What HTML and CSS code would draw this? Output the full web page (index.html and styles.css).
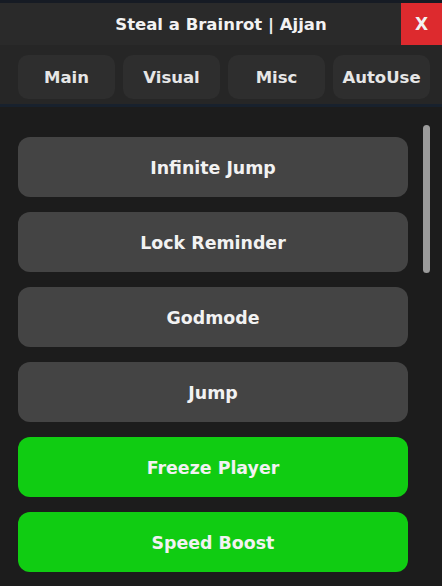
FILE: index.html
```html
<!DOCTYPE html>
<html>
<head>
<meta charset="utf-8">
<link rel="stylesheet" href="styles.css">
</head>
<body>
<div class="window">
  <div class="topstrip"></div>
  <div class="titlebar">
    <div class="title">Steal a Brainrot | Ajjan</div>
    <div class="close">X</div>
  </div>
  <div class="tabs">
    <div class="tab">Main</div>
    <div class="tab">Visual</div>
    <div class="tab">Misc</div>
    <div class="tab">AutoUse</div>
  </div>
  <div class="content">
    <div class="list">
      <div class="btn">Infinite Jump</div>
      <div class="btn">Lock Reminder</div>
      <div class="btn">Godmode</div>
      <div class="btn">Jump</div>
      <div class="btn on">Freeze Player</div>
      <div class="btn on">Speed Boost</div>
    </div>
    <div class="scrollbar"></div>
  </div>
</div>
</body>
</html>
```
FILE: styles.css
```css
html, body {
  margin: 0;
  padding: 0;
  background: #1c1c1c;
}
.window {
  width: 442px;
  height: 586px;
  overflow: hidden;
  font-family: "DejaVu Sans", "Open Sans", sans-serif;
  font-weight: 700;
  color: #f2f2f2;
}
.topstrip {
  height: 3px;
  background: #161b24;
}
.titlebar {
  height: 42px;
  background: #2a2a2a;
  display: flex;
  align-items: center;
}
.title {
  flex: 1;
  text-align: center;
  font-size: 16.5px;
  padding-left: 41px;
}
.close {
  width: 41px;
  height: 42px;
  background: #dd2a2e;
  display: flex;
  align-items: center;
  justify-content: center;
  font-size: 17px;
}
.tabs {
  height: 62px;
  background: #262626;
  display: flex;
  gap: 8px;
  padding: 10px 12px 0 18px;
  box-sizing: border-box;
  border-bottom: 3px solid #18212d;
}
.tab {
  width: 97px;
  height: 44px;
  border-radius: 10px;
  background: #2e2e2e;
  display: flex;
  align-items: center;
  justify-content: center;
  font-size: 16.5px;
  color: #e6e6e6;
}
.content {
  position: relative;
  height: 479px;
  background: #1c1c1c;
}
.list {
  display: flex;
  flex-direction: column;
  gap: 15px;
  padding: 30px 0 0 18px;
}
.btn {
  width: 390px;
  height: 60px;
  border-radius: 12px;
  background: #444444;
  display: flex;
  align-items: center;
  justify-content: center;
  font-size: 17.4px;
  padding-top: 2px;
  box-sizing: border-box;
}
.btn.on {
  background: #10cc12;
}
.scrollbar {
  position: absolute;
  left: 423px;
  top: 18px;
  width: 7px;
  height: 148px;
  border-radius: 4px;
  background: #9b9b9b;
}
```
